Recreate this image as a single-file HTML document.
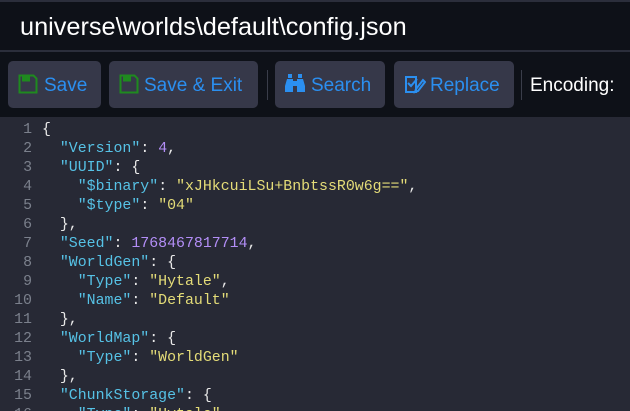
<!DOCTYPE html>
<html><head><style>
html,body{margin:0;padding:0;width:630px;height:411px;overflow:hidden;background:#272935;font-family:"Liberation Sans",sans-serif}
.top{position:absolute;left:0;top:0;width:630px;height:2px;background:#2b2e3b}
.title{position:absolute;left:0;top:2px;width:630px;height:48px;background:#0e1118;color:#fff;font-size:25.3px;line-height:50px;padding-left:20px;box-sizing:border-box}
.sep1{position:absolute;left:0;top:50px;width:630px;height:2px;background:#2b2e3b}
.tb{position:absolute;left:0;top:52px;width:630px;height:65px;background:#0e1118}
.btn{position:absolute;top:9px;height:47px;background:#363849;border-radius:5px;color:#2b8ff0;font-size:19px;line-height:47px;box-sizing:border-box}
.btn svg{position:absolute;left:10px;top:13px}
.btn span{position:absolute;top:1px}
.vs{position:absolute;top:18px;width:1px;height:30px;background:#3a3d4a}
.enc{position:absolute;left:530px;top:10px;line-height:47px;color:#fff;font-size:19px}
.ed{position:absolute;left:0;top:117px;width:630px;height:294px;box-sizing:border-box;overflow:hidden;background:#272935;font-family:"Liberation Mono",monospace;font-size:14.9px;line-height:19px;padding-top:4px}
.l{height:19px;white-space:pre;position:relative}
.n{position:absolute;right:598px;color:#7b808c;text-align:right}
.c{position:absolute;left:42px;color:#e8e8e8}
.k{color:#56c2e6}.s{color:#e4dc78}.m{color:#b38ef7}
</style></head><body>
<div class="top"></div>
<div class="title">universe\worlds\default\config.json</div>
<div class="sep1"></div>
<div class="tb">
 <div class="btn" style="left:8px;width:93px"><svg width="20" height="20" viewBox="0 0 20 20"><path d="M1.5 1.5h14l3 3v14h-17z" fill="none" stroke="#1f8a1f" stroke-width="2"/><rect x="4" y="1.5" width="8" height="6" fill="#1f8a1f"/></svg><span style="left:36px">Save</span></div>
 <div class="btn" style="left:109px;width:149px"><svg width="20" height="20" viewBox="0 0 20 20"><path d="M1.5 1.5h14l3 3v14h-17z" fill="none" stroke="#1f8a1f" stroke-width="2"/><rect x="4" y="1.5" width="8" height="6" fill="#1f8a1f"/></svg><span style="left:35px">Save &amp; Exit</span></div>
 <div class="vs" style="left:267px"></div>
 <div class="btn" style="left:275px;width:110px"><svg width="20" height="20" viewBox="0 0 20 20" fill="#2b8ff0"><rect x="3" y="0" width="4" height="4"/><rect x="13" y="0" width="4" height="4"/><path d="M2 5h6v13H0v-6zM12 5h6l2 7v6h-8z"/><rect x="8" y="7" width="4" height="5"/></svg><span style="left:36px">Search</span></div>
 <div class="btn" style="left:394px;width:120px"><svg width="22" height="20" viewBox="0 0 22 20" fill="none" stroke="#2b8ff0" stroke-width="2"><path d="M2 3h10v15H2zM4 9l3 3 6-7M12 15l7-9 2 2-7 9-3 1z"/></svg><span style="left:36px">Replace</span></div>
 <div class="vs" style="left:521px"></div>
 <div class="enc">Encoding:</div>
</div>
<div class="ed">
<div class="l"><span class="n">1</span><span class="c">{</span></div>
<div class="l"><span class="n">2</span><span class="c">  <span class="k">"Version"</span>: <span class="m">4</span>,</span></div>
<div class="l"><span class="n">3</span><span class="c">  <span class="k">"UUID"</span>: {</span></div>
<div class="l"><span class="n">4</span><span class="c">    <span class="k">"$binary"</span>: <span class="s">"xJHkcuiLSu+BnbtssR0w6g=="</span>,</span></div>
<div class="l"><span class="n">5</span><span class="c">    <span class="k">"$type"</span>: <span class="s">"04"</span></span></div>
<div class="l"><span class="n">6</span><span class="c">  },</span></div>
<div class="l"><span class="n">7</span><span class="c">  <span class="k">"Seed"</span>: <span class="m">1768467817714</span>,</span></div>
<div class="l"><span class="n">8</span><span class="c">  <span class="k">"WorldGen"</span>: {</span></div>
<div class="l"><span class="n">9</span><span class="c">    <span class="k">"Type"</span>: <span class="s">"Hytale"</span>,</span></div>
<div class="l"><span class="n">10</span><span class="c">    <span class="k">"Name"</span>: <span class="s">"Default"</span></span></div>
<div class="l"><span class="n">11</span><span class="c">  },</span></div>
<div class="l"><span class="n">12</span><span class="c">  <span class="k">"WorldMap"</span>: {</span></div>
<div class="l"><span class="n">13</span><span class="c">    <span class="k">"Type"</span>: <span class="s">"WorldGen"</span></span></div>
<div class="l"><span class="n">14</span><span class="c">  },</span></div>
<div class="l"><span class="n">15</span><span class="c">  <span class="k">"ChunkStorage"</span>: {</span></div>
<div class="l"><span class="n">16</span><span class="c">    <span class="k">"Type"</span>: <span class="s">"Hytale"</span></span></div>
</div>
</body></html>
